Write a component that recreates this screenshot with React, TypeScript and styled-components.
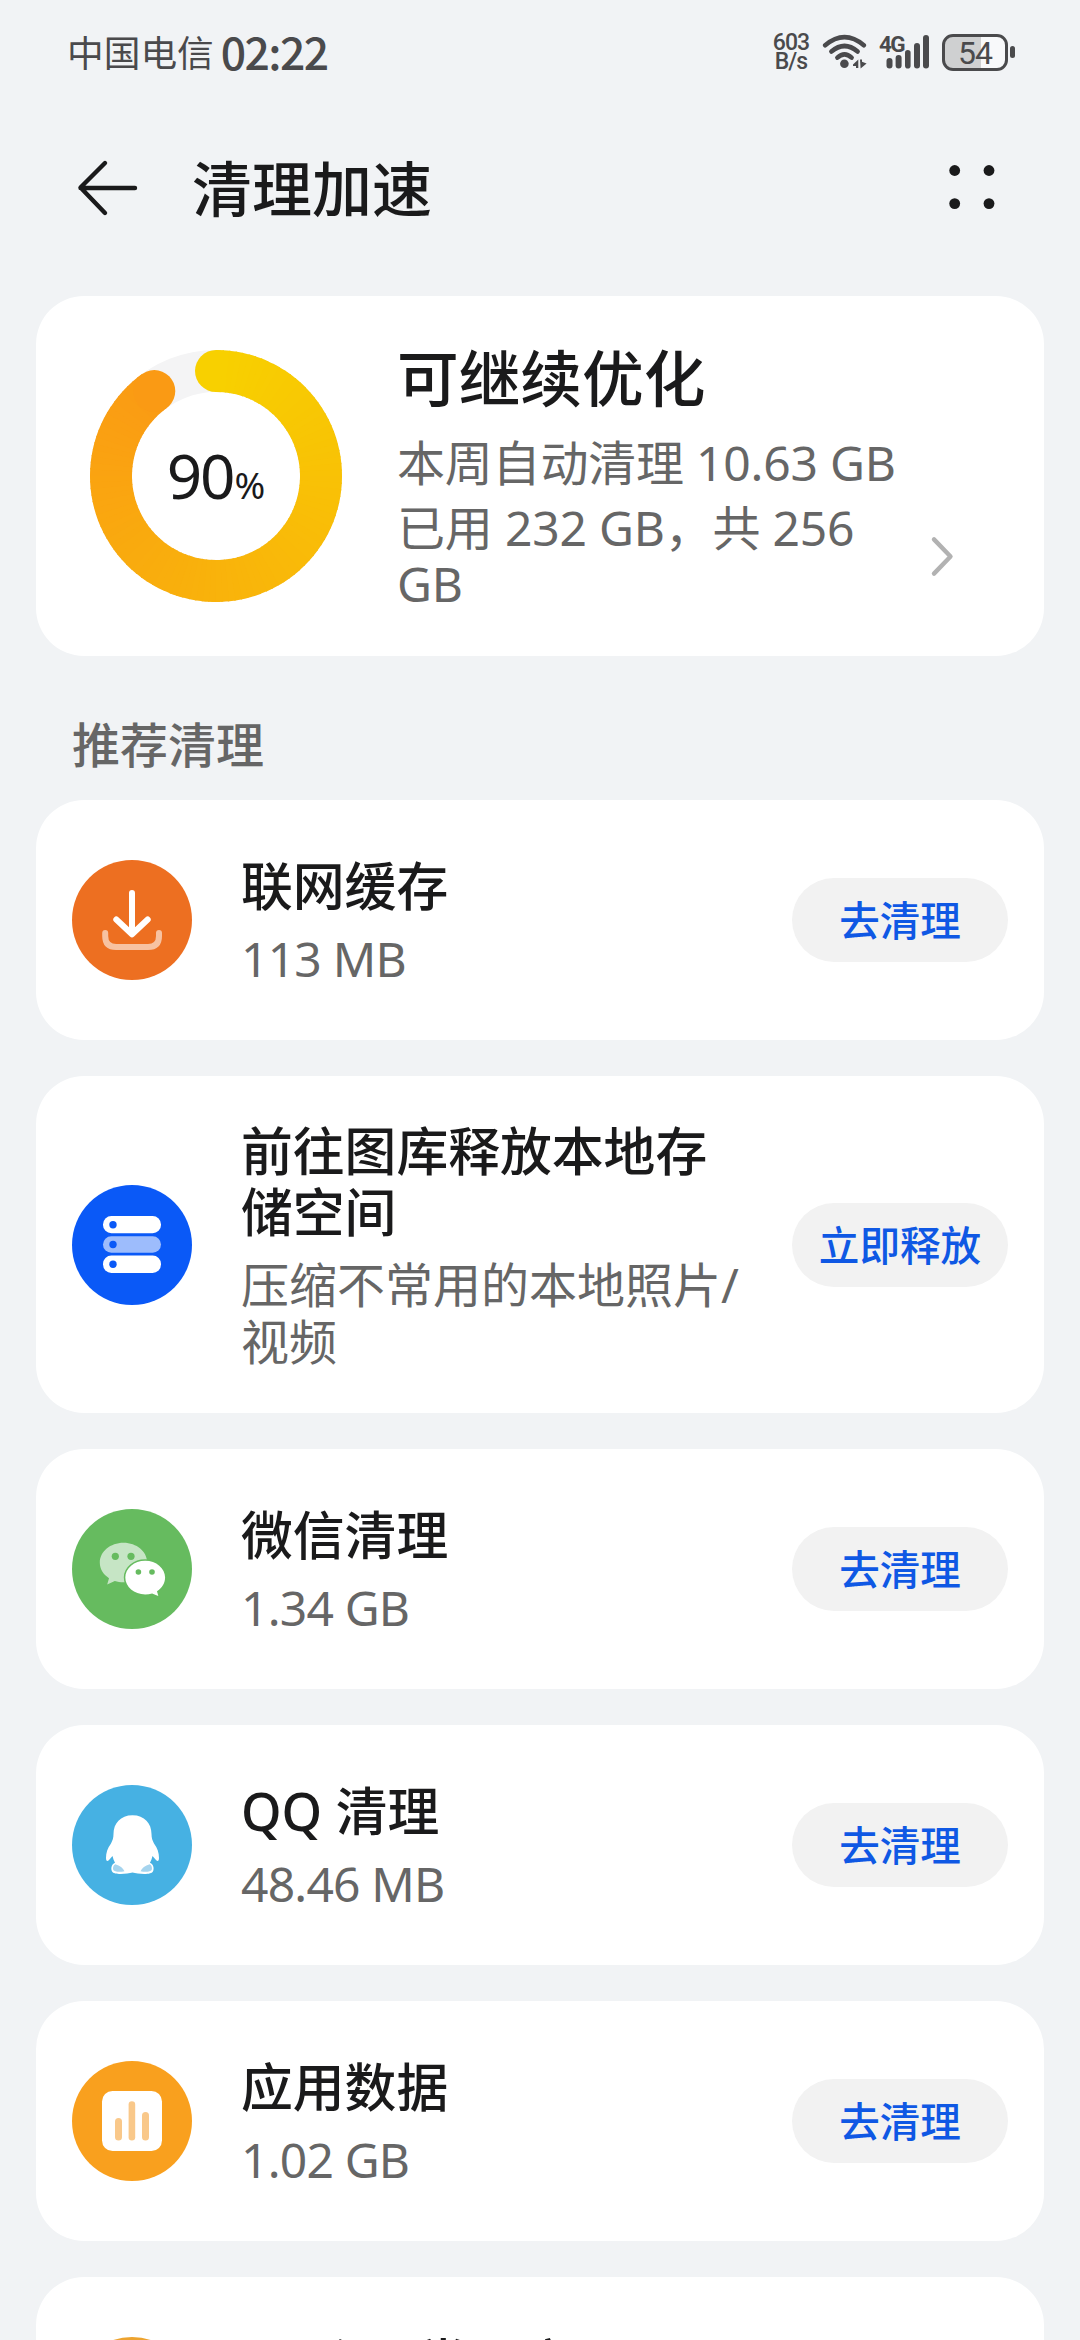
import React from 'react';
import styled, { createGlobalStyle } from 'styled-components';

const GlobalStyle = createGlobalStyle`
  * { box-sizing: border-box; margin: 0; }
  body { margin: 0; background: #f1f3f5; }
`;

const Screen = styled.div`
  width: 1080px;
  height: 2340px;
  overflow: hidden;
  background: #f1f3f5;
  color: #1a1a1b;
  font-family: 'Noto Sans', 'Noto Sans CJK SC', sans-serif;
`;

const StatusBar = styled.header`
  display: flex;
  align-items: center;
  justify-content: space-between;
  height: 104px;
  padding: 0 65px 0 67px;
  color: #4a4a4c;
`;

const StatusGroup = styled.div<{ $gap: number }>`
  display: flex;
  align-items: center;
  gap: ${(p) => p.$gap}px;
`;

const Carrier = styled.span`
  font-size: 36.7px;
  line-height: 52px;
  padding-top: 1px;
`;

const Clock = styled.span`
  font-family: 'Noto Sans CJK SC', sans-serif;
  font-size: 44.5px;
  font-weight: 500;
  line-height: 52px;
  letter-spacing: -1.6px;
  padding-bottom: 3px;
`;

const NetSpeed = styled.div`
  width: 40px;
  font-family: Roboto, sans-serif;
  font-size: 23px;
  font-weight: 500;
  line-height: 19.5px;
  letter-spacing: -0.9px;
  text-align: center;
`;

const Battery = styled.div`
  display: flex;
  align-items: center;
  gap: 2px;
`;

const BatteryBody = styled.div`
  width: 66px;
  height: 37px;
  border: 3px solid #4a4a4c;
  border-radius: 11px;
  background: linear-gradient(to right, #cfd0d1 60%, #f8f9fa 60%);
  font-family: Roboto, sans-serif;
  font-size: 32px;
  line-height: 32px;
  text-align: center;
  letter-spacing: -1px;
`;

const BatteryNub = styled.div`
  width: 5px;
  height: 12px;
  border-radius: 2.5px;
  background: #4a4a4c;
`;

const TitleBar = styled.nav`
  display: flex;
  align-items: center;
  height: 168px;
  padding: 0 84px 0 76px;
`;

const PageTitle = styled.h1`
  flex: 1;
  margin-left: 52px;
  padding-top: 2px;
  font-size: 60px;
  font-weight: 500;
  line-height: 80px;
`;

const Content = styled.main`
  padding: 24px 36px 0;
`;

const SummaryCard = styled.section`
  display: flex;
  height: 360px;
  padding: 46px 90px 0 54px;
  border-radius: 48px;
  background: #fff;
`;

const RingBox = styled.div`
  display: grid;
  width: 252px;
  height: 252px;
  margin-top: 8px;
  flex: none;
  & > * { grid-area: 1 / 1; }
`;

const RingLabel = styled.div`
  display: flex;
  align-items: baseline;
  justify-content: center;
  align-self: center;
  padding-top: 7px;
  font-size: 62px;
  line-height: 80px;
  letter-spacing: -2px;
`;

const Percent = styled.span`
  font-size: 37px;
  letter-spacing: 0;
  margin-left: 1px;
`;

const SummaryText = styled.div`
  flex: 1;
  margin-left: 55px;
`;

const SummaryTitle = styled.h2`
  font-size: 61.7px;
  font-weight: 500;
  line-height: 72px;
`;

const SummaryLine = styled.p`
  flex: 1;
  color: #666;
  font-size: 48px;
  line-height: 56.5px;
  letter-spacing: -0.2px;
`;

const CleanedLine = styled(SummaryLine)`
  margin: 21px 0 8px;
`;

const UsageRow = styled.div`
  display: flex;
  align-items: center;
  gap: 8px;
`;

const SectionLabel = styled.h3`
  height: 144px;
  padding: 60px 36px 0;
  color: #666;
  font-size: 48px;
  font-weight: 500;
  line-height: 57px;
`;

const CardList = styled.div`
  display: flex;
  flex-direction: column;
  gap: 36px;
`;

const Card = styled.article<{ $tall?: boolean }>`
  display: flex;
  align-items: center;
  flex: none;
  height: ${(p) => (p.$tall ? 337 : 240)}px;
  padding: 0 36px;
  border-radius: 48px;
  background: #fff;
`;

const Badge = styled.svg`
  flex: none;
  width: 120px;
  height: 120px;
`;

const CardText = styled.div`
  flex: 1;
  margin: 0 34px 0 49px;
  padding-top: 2px;
`;

const CardTitle = styled.h4`
  font-size: 51.8px;
  font-weight: 500;
  line-height: 61px;
`;

const CardDetail = styled.p<{ $tight: boolean }>`
  margin-top: 13px;
  color: #666;
  font-size: 48px;
  line-height: 57px;
  letter-spacing: ${(p) => (p.$tight ? -0.8 : 0)}px;
`;

const ActionButton = styled.button`
  flex: none;
  width: 216px;
  height: 84px;
  padding: 2px 0 0;
  border: 0;
  border-radius: 42px;
  background: #f2f2f2;
  color: #0f58e4;
  font-family: inherit;
  font-size: 40.6px;
  font-weight: 500;
  line-height: 82px;
`;

const WifiIcon = () => (
  <svg width="46" height="36" viewBox="0 0 46 36" fill="none" stroke="#4a4a4c" strokeWidth="4.6" strokeLinecap="round">
    <path d="M3.2 11.2Q22.5 -5 41.8 11.2" />
    <path d="M9.4 17.6Q22.5 6.4 35.6 17.6" />
    <path d="M15.4 23.6Q22.5 17 29.6 23.6" />
    <circle cx="22.4" cy="29.8" r="4.3" fill="#4a4a4c" stroke="none" />
    <path d="M31 30.4L36.3 25.5V34H34V32H31ZM38 25.5H40V27.8L44.6 29.6L38.6 34.5Z" fill="#4a4a4c" stroke="none" />
  </svg>
);

const SignalBox = styled.div`
  display: grid;
  width: 52px;
  height: 36px;
  & > * { grid-area: 1 / 1; }
`;

const NetType = styled.span`
  font-family: Roboto, sans-serif;
  font-size: 22.5px;
  font-weight: 700;
  line-height: 20px;
  letter-spacing: -1.6px;
`;

const Signal = () => (
  <SignalBox>
    <NetType>4G</NetType>
    <svg width="52" height="36" viewBox="0 0 52 36" fill="#4a4a4c">
      <rect x="7.5" y="24" width="6" height="10.5" rx="3" />
      <rect x="16.6" y="21" width="6" height="13.5" rx="3" />
      <rect x="26" y="16" width="5.6" height="18.5" rx="2.8" />
      <rect x="35" y="9" width="6" height="25.5" rx="3" />
      <rect x="44" y="1" width="6" height="33.5" rx="3" />
    </svg>
  </SignalBox>
);

const BackIcon = () => (
  <svg width="64" height="60" viewBox="0 0 64 60" fill="none" stroke="#1a1a1b" strokeWidth="4.4" strokeLinecap="round" strokeLinejoin="round">
    <path d="M59 30H4.5M29 5L4.5 29.5L29 55" />
  </svg>
);

const MenuIcon = () => (
  <svg width="48" height="48" viewBox="0 0 48 48" fill="#1a1a1b">
    <circle cx="6.7" cy="6.5" r="5.4" />
    <circle cx="41" cy="6.5" r="5.4" />
    <circle cx="6.7" cy="39.6" r="5.4" />
    <circle cx="41" cy="39.6" r="5.4" />
  </svg>
);

const ChevronIcon = () => (
  <svg width="24" height="42" viewBox="0 0 24 42" fill="none" stroke="#b2b2b2" strokeWidth="4.4" strokeLinecap="round" strokeLinejoin="round">
    <path d="M4 4.4L20.5 21.5L4 38.6" />
  </svg>
);

const ringPoint = (deg: number) => {
  const a = (deg * Math.PI) / 180;
  return [126 + 105 * Math.sin(a), 126 - 105 * Math.cos(a)];
};

const ringColor = (t: number) => {
  const from = [248, 208, 0];
  const to = [250, 154, 20];
  return `rgb(${from.map((c, i) => Math.round(c + (to[i] - c) * t)).join(',')})`;
};

/* The stroke is split into short arcs so that its colour can follow the angle. */
const Ring = ({ value }: { value: number }) => {
  const sweep = value * 360;
  const steps = 108;
  const [ex, ey] = ringPoint(sweep);
  return (
    <svg width="252" height="252" viewBox="0 0 252 252" fill="none">
      <circle cx="126" cy="126" r="105" stroke="#f4f4f5" strokeWidth="42" />
      <circle cx="126" cy="21" r="21" fill={ringColor(0)} />
      {Array.from({ length: steps }, (_, i) => {
        const [x1, y1] = ringPoint((sweep * i) / steps);
        const [x2, y2] = ringPoint(Math.min(sweep, (sweep * (i + 1)) / steps + 0.6));
        return <path key={i} d={`M${x1} ${y1}A105 105 0 0 1 ${x2} ${y2}`} stroke={ringColor(i / steps)} strokeWidth="42" />;
      })}
      <circle cx={ex} cy={ey} r="21" fill={ringColor(1)} />
    </svg>
  );
};

const DownloadGlyph = () => (
  <g fill="none" stroke="#fff" strokeWidth="6" strokeLinecap="round" strokeLinejoin="round">
    <path d="M33.2 73V76Q33.2 87 44.2 87H76Q87 87 87 76V73" opacity="0.58" />
    <path d="M60 33V74M44.3 59.5L60 74.3L75.7 59.5" />
  </g>
);

const StorageGlyph = () => (
  <g fill="#fff">
    <rect x="31" y="31" width="58" height="17.3" rx="8.4" />
    <rect x="31" y="51.2" width="58" height="16.6" rx="8.3" opacity="0.6" />
    <rect x="31" y="70.6" width="58" height="17.3" rx="8.4" />
    <g fill="#0a59f7">
      <circle cx="41" cy="39.7" r="3.7" />
      <circle cx="41" cy="59.5" r="3.7" />
      <circle cx="41" cy="79.2" r="3.7" />
    </g>
  </g>
);

const WechatGlyph = () => (
  <g fill="#fff">
    <path d="M51.5 33.7C38.4 33.7 27.8 42.5 27.8 53.6C27.8 60 31 65.4 37 69.2L35.2 75.4L42.8 71.9C45.5 72.8 48.4 73.3 51.5 73.3C64.6 73.3 75.2 64.4 75.2 53.5C75.2 42.5 64.6 33.7 51.5 33.7Z" fill="#c6e5c5" />
    <circle cx="43.3" cy="47.3" r="3.6" fill="#66bb5f" />
    <circle cx="59" cy="47.3" r="3.6" fill="#66bb5f" />
    <path d="M73.2 51.7C62.2 51.7 53.3 59.2 53.3 68.5C53.3 77.8 62.2 85.4 73.2 85.4C75.6 85.4 78 85 80.1 84.4L86.3 87L85 82.2C90 79.1 93.1 74.1 93.1 68.5C93.1 59.2 84.2 51.7 73.2 51.7Z" stroke="#66bb5f" strokeWidth="3" paintOrder="stroke" />
    <circle cx="66.4" cy="63" r="2.8" fill="#66bb5f" />
    <circle cx="80" cy="63" r="2.8" fill="#66bb5f" />
  </g>
);

const PenguinGlyph = () => (
  <g>
    <path d="M43.5 77.5C39.5 79 38.8 83 39.8 86C41.5 90.5 55 89 60.5 87.5C66 89 79.5 90.5 81.2 86C82.2 83 81.5 79 77.5 77.5Z" fill="#fff" />
    <path d="M60.5 30.3C48.5 30.3 41.5 38.5 41.5 49C41.5 53 40.5 55.5 39 58.5C35.5 63 34 68 34 73C34 76 35.3 76.7 37 75L40.5 71C42.5 81 50 87 60.5 87C71 87 78.5 81 80.5 71L84 75C85.7 76.7 87 76 87 73C87 68 85.5 63 82 58.5C80.5 55.5 79.5 53 79.5 49C79.5 38.5 72.5 30.3 60.5 30.3Z" fill="#fff" />
    <path d="M43.3 79.3C48 80.5 51 83 52.5 86.2C48 87.2 42.5 87 41.3 85C40.5 83 41.2 80.5 43.3 79.3ZM77.7 79.3C73 80.5 70 83 68.5 86.2C73 87.2 78.5 87 79.7 85C80.5 83 79.8 80.5 77.7 79.3Z" fill="#a5d4ee" />
  </g>
);

const ChartGlyph = () => (
  <g>
    <rect x="30" y="30" width="60" height="60" rx="10.5" fill="#fff" />
    <g fill="#f9c88a">
      <rect x="43" y="57" width="7" height="22.5" rx="3.5" />
      <rect x="56.6" y="40.3" width="6.6" height="39.2" rx="3.3" />
      <rect x="70" y="51" width="7" height="28.5" rx="3.5" />
    </g>
  </g>
);

type Item = {
  title: string;
  detail: string;
  action: string;
  color: string;
  glyph: React.ReactNode;
  tall?: boolean;
};

const items: Item[] = [
  { title: '联网缓存', detail: '113 MB', action: '去清理', color: '#ed6f21', glyph: <DownloadGlyph /> },
  { title: '前往图库释放本地存储空间', detail: '压缩不常用的本地照片/视频', action: '立即释放', color: '#0a59f7', glyph: <StorageGlyph />, tall: true },
  { title: '微信清理', detail: '1.34 GB', action: '去清理', color: '#66bb5f', glyph: <WechatGlyph /> },
  { title: 'QQ 清理', detail: '48.46 MB', action: '去清理', color: '#46b1e3', glyph: <PenguinGlyph /> },
  { title: '应用数据', detail: '1.02 GB', action: '去清理', color: '#f9a01e', glyph: <ChartGlyph /> },
  { title: '12 个不常用应用', detail: '1.02 GB', action: '去清理', color: '#eda32f', glyph: <ChartGlyph /> },
];

export default function App() {
  return (
    <Screen>
      <GlobalStyle />
      <StatusBar>
        <StatusGroup $gap={7}>
          <Carrier>中国电信</Carrier>
          <Clock>02:22</Clock>
        </StatusGroup>
        <StatusGroup $gap={11}>
          <NetSpeed>603<br />B/s</NetSpeed>
          <WifiIcon />
          <Signal />
          <Battery>
            <BatteryBody>54</BatteryBody>
            <BatteryNub />
          </Battery>
        </StatusGroup>
      </StatusBar>
      <TitleBar>
        <BackIcon />
        <PageTitle>清理加速</PageTitle>
        <MenuIcon />
      </TitleBar>
      <Content>
        <SummaryCard>
          <RingBox>
            <Ring value={0.9} />
            <RingLabel>90<Percent>%</Percent></RingLabel>
          </RingBox>
          <SummaryText>
            <SummaryTitle>可继续优化</SummaryTitle>
            <CleanedLine>本周自动清理 10.63 GB</CleanedLine>
            <UsageRow>
              <SummaryLine>已用 232 GB，共 256 GB</SummaryLine>
              <ChevronIcon />
            </UsageRow>
          </SummaryText>
        </SummaryCard>
        <SectionLabel>推荐清理</SectionLabel>
        <CardList>
          {items.map((item) => (
            <Card key={item.title} $tall={item.tall}>
              <Badge viewBox="0 0 120 120">
                <circle cx="60" cy="60" r="60" fill={item.color} />
                {item.glyph}
              </Badge>
              <CardText>
                <CardTitle>{item.title}</CardTitle>
                <CardDetail $tight={!item.tall}>{item.detail}</CardDetail>
              </CardText>
              <ActionButton>{item.action}</ActionButton>
            </Card>
          ))}
        </CardList>
      </Content>
    </Screen>
  );
}
